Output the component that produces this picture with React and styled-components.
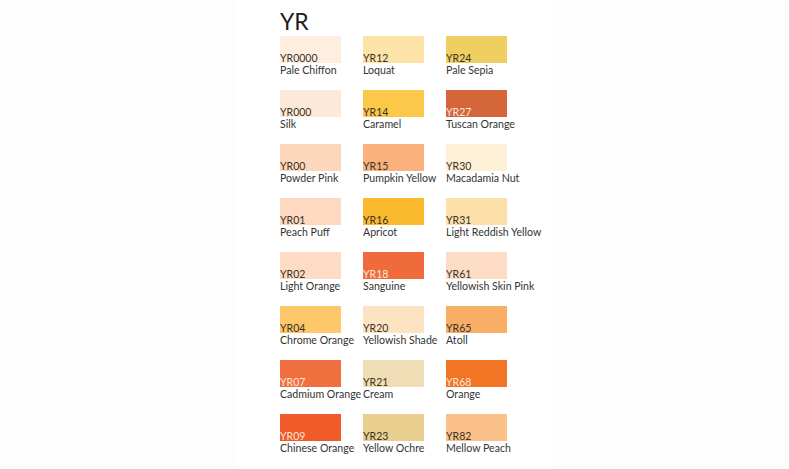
import React from 'react'
import styled, { createGlobalStyle } from 'styled-components'

const swatches = [
  { code: 'YR0000', name: 'Pale Chiffon', color: '#fdeee0' },
  { code: 'YR12', name: 'Loquat', color: '#fde3a8' },
  { code: 'YR24', name: 'Pale Sepia', color: '#efcf62' },
  { code: 'YR000', name: 'Silk', color: '#fde9da' },
  { code: 'YR14', name: 'Caramel', color: '#fcc849' },
  { code: 'YR27', name: 'Tuscan Orange', color: '#d4663a', dark: true },
  { code: 'YR00', name: 'Powder Pink', color: '#fdd7bc' },
  { code: 'YR15', name: 'Pumpkin Yellow', color: '#fbb17c' },
  { code: 'YR30', name: 'Macadamia Nut', color: '#fdf0d6' },
  { code: 'YR01', name: 'Peach Puff', color: '#fdd9c1' },
  { code: 'YR16', name: 'Apricot', color: '#fbb92e' },
  { code: 'YR31', name: 'Light Reddish Yellow', color: '#fde0a9' },
  { code: 'YR02', name: 'Light Orange', color: '#fddbc4' },
  { code: 'YR18', name: 'Sanguine', color: '#ef6b3c', dark: true },
  { code: 'YR61', name: 'Yellowish Skin Pink', color: '#fcdcc5' },
  { code: 'YR04', name: 'Chrome Orange', color: '#fdc76a' },
  { code: 'YR20', name: 'Yellowish Shade', color: '#fde3c2' },
  { code: 'YR65', name: 'Atoll', color: '#f9ae66' },
  { code: 'YR07', name: 'Cadmium Orange', color: '#f06f3e', dark: true },
  { code: 'YR21', name: 'Cream', color: '#f1ddb4' },
  { code: 'YR68', name: 'Orange', color: '#f27425', dark: true },
  { code: 'YR09', name: 'Chinese Orange', color: '#ef5a28', dark: true },
  { code: 'YR23', name: 'Yellow Ochre', color: '#e8cf8e' },
  { code: 'YR82', name: 'Mellow Peach', color: '#fbc189' },
]

const GlobalStyle = createGlobalStyle`
  html, body {
    margin: 0;
    padding: 0;
    background: #fdfdfd;
  }
  body {
    font-family: Lato, "Open Sans", sans-serif;
    color: #333333;
  }
`

const Stage = styled.div`
  width: 789px;
  height: 469px;
  display: flex;
  justify-content: center;
  overflow: hidden;
`

const Sheet = styled.div`
  width: 316px;
  height: 465px;
  margin-left: 1px;
  background: #ffffff;
  padding: 7px 0 0 43px;
  box-sizing: border-box;
`

const Title = styled.h1`
  margin: 0;
  font-size: 23px;
  font-weight: 400;
  line-height: 29px;
  color: #1e1e1e;
`

const Grid = styled.div`
  display: grid;
  grid-template-columns: repeat(3, 83px);
  row-gap: 13px;
`

const Cell = styled.div`
  display: flex;
  flex-direction: column;
`

const Swatch = styled.div`
  width: 61px;
  height: 27px;
  background: ${p => p.color};
  display: flex;
  align-items: flex-end;
`

const Code = styled.span`
  font-size: 10.5px;
  line-height: 10px;
  color: ${p => (p.dark ? '#fbe7dc' : '#3a3226')};
  white-space: nowrap;
`

const Name = styled.span`
  font-size: 10.6px;
  line-height: 14px;
  color: #333333;
  white-space: nowrap;
`

export default function App() {
  return (
    <Stage>
      <GlobalStyle />
      <Sheet>
        <Title>YR</Title>
        <Grid>
          {swatches.map(s => (
            <Cell key={s.code}>
              <Swatch color={s.color}>
                <Code dark={s.dark}>{s.code}</Code>
              </Swatch>
              <Name>{s.name}</Name>
            </Cell>
          ))}
        </Grid>
      </Sheet>
    </Stage>
  )
}
